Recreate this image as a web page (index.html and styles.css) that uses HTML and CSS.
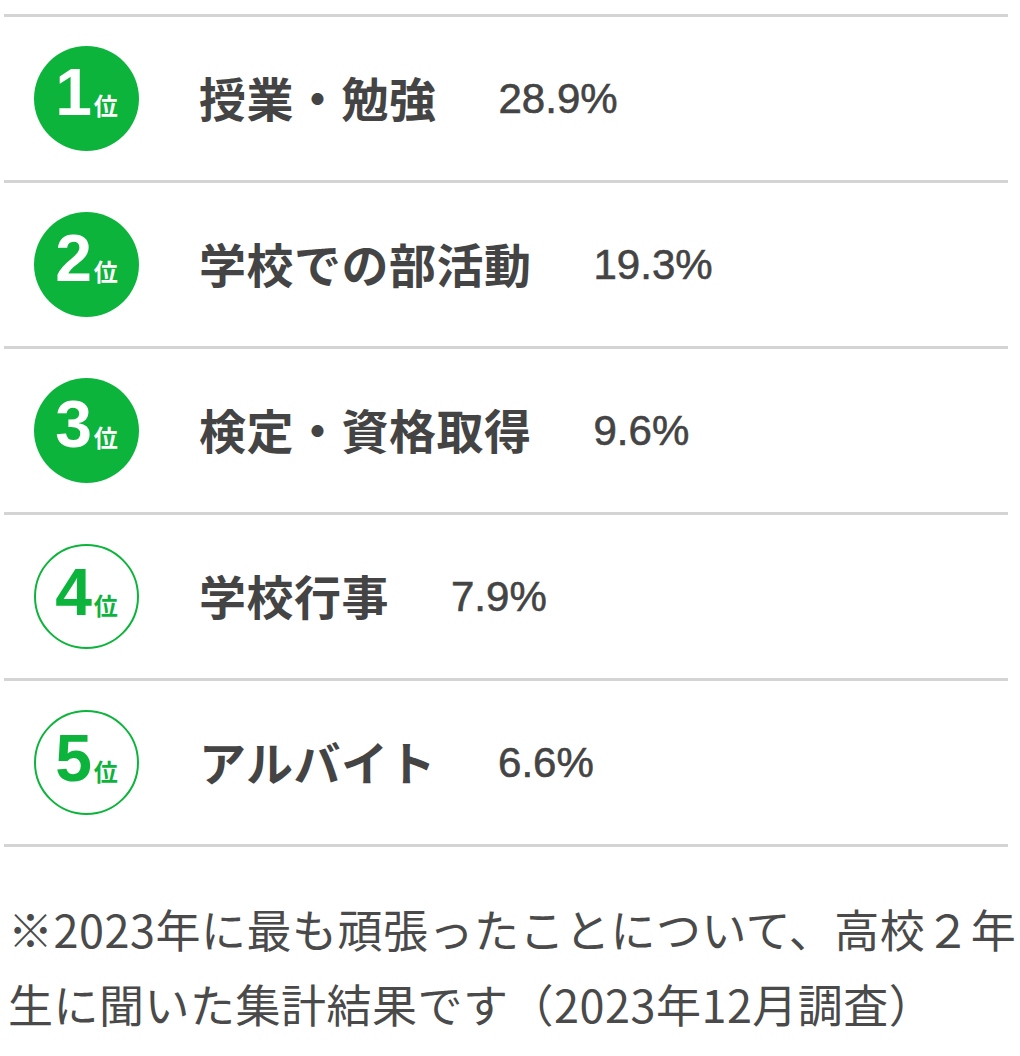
FILE: index.html
```html
<!DOCTYPE html>
<html lang="ja">
<head>
<meta charset="utf-8">
<link rel="stylesheet" href="styles.css">
</head>
<body>
<div class="ranking">
  <div class="row">
    <div class="badge filled"><span class="num">1</span><span class="rank">位</span></div>
    <div class="label">授業・勉強</div>
    <div class="pct">28.9%</div>
  </div>
  <div class="row">
    <div class="badge filled"><span class="num">2</span><span class="rank">位</span></div>
    <div class="label">学校での部活動</div>
    <div class="pct">19.3%</div>
  </div>
  <div class="row">
    <div class="badge filled"><span class="num">3</span><span class="rank">位</span></div>
    <div class="label">検定・資格取得</div>
    <div class="pct">9.6%</div>
  </div>
  <div class="row">
    <div class="badge outline"><span class="num">4</span><span class="rank">位</span></div>
    <div class="label">学校行事</div>
    <div class="pct">7.9%</div>
  </div>
  <div class="row last">
    <div class="badge outline"><span class="num">5</span><span class="rank">位</span></div>
    <div class="label">アルバイト</div>
    <div class="pct">6.6%</div>
  </div>
</div>
<p class="note">※2023年に最も頑張ったことについて、高校２年生に聞いた集計結果です（2023年12月調査）</p>
</body>
</html>
```
FILE: styles.css
```css
html, body {
  margin: 0;
  padding: 0;
  background: #ffffff;
}
body {
  font-family: "Noto Sans CJK JP", "Noto Sans", sans-serif;
  color: #444444;
}
.ranking {
  margin: 14px 12px 0 4px;
}
.row {
  display: flex;
  align-items: center;
  height: 163px;
  border-top: 3px solid #d4d4d4;
}
.row.last {
  border-bottom: 3px solid #d4d4d4;
}
.badge {
  box-sizing: border-box;
  width: 105px;
  height: 105px;
  border-radius: 50%;
  margin-left: 30px;
  margin-right: 60px;
  display: flex;
  align-items: baseline;
  justify-content: center;
  padding-top: 13px;
  flex-shrink: 0;
}
.badge.filled {
  background: #0cb43b;
  color: #ffffff;
}
.badge.outline {
  border: 2px solid #0cb43b;
  color: #0cb43b;
}
.num {
  font-family: "Liberation Sans", Arial, sans-serif;
  font-weight: 700;
  font-size: 66px;
  line-height: 1;
  margin-right: 2px;
}
.rank {
  font-family: "Noto Sans CJK JP", sans-serif;
  font-weight: 700;
  font-size: 24px;
  line-height: 1;
}
.label {
  font-weight: 700;
  font-size: 47px;
  line-height: 1;
  letter-spacing: 0.5px;
  margin-top: -4px;
}
.pct {
  font-family: "Liberation Sans", Arial, sans-serif;
  font-size: 42px;
  line-height: 1;
  margin-left: 62px;
  -webkit-text-stroke: 0.6px #444444;
}
.note {
  margin: 44px 0 0 8px;
  width: 1012px;
  font-size: 45px;
  line-height: 75px;
  letter-spacing: 0.5px;
  color: #4a4a4a;
}
```
